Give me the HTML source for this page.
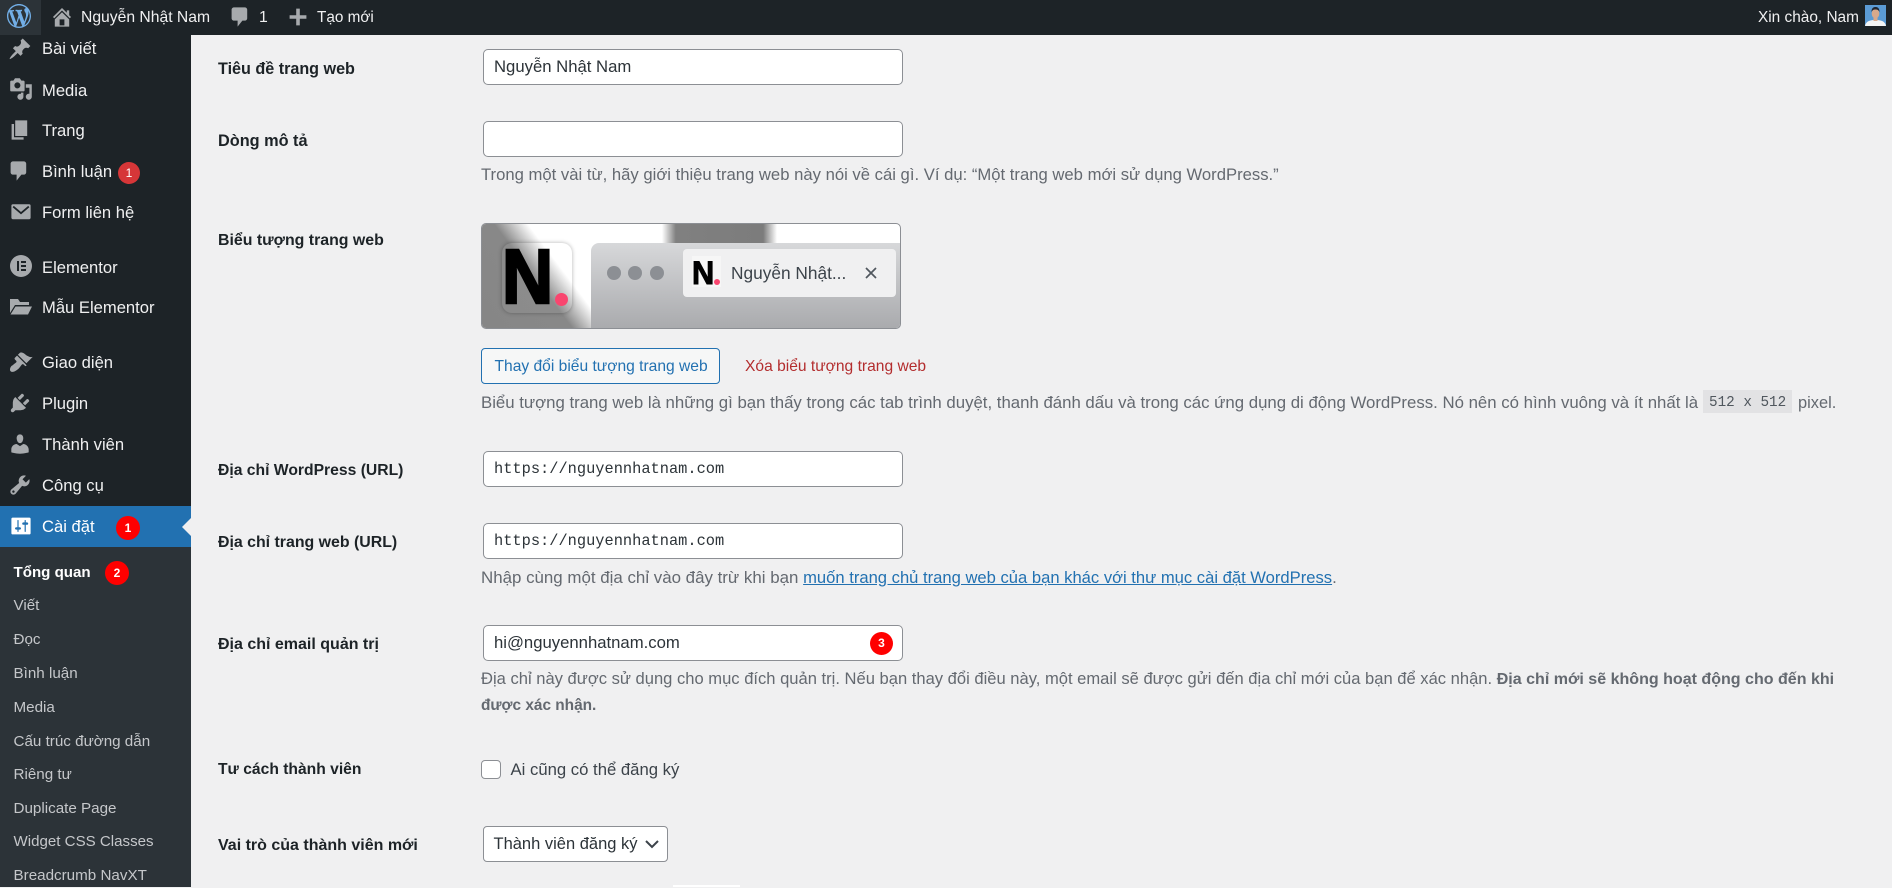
<!DOCTYPE html>
<html lang="vi"><head><meta charset="utf-8"><title>Cài đặt</title>
<style>
*{box-sizing:border-box}
html,body{margin:0;padding:0;width:1892px;height:887px;overflow:hidden;background:#f0f0f1;font-family:"Liberation Sans","Noto Sans CJK JP",sans-serif;font-size:16.5px;color:#1d2327}
.a,.t,svg.i{position:absolute}
.t{white-space:nowrap;line-height:24px;height:24px}
#bar{position:absolute;left:0;top:0;width:1892px;height:35px;background:#1d2327}
#side{position:absolute;left:0;top:35px;width:191px;height:852px;background:#1d2327}
#sub{position:absolute;left:0;top:512px;width:191px;height:340px;background:#2c3338}
.m{color:#f0f0f1;left:42px;font-size:16.6px}
.s{color:#c5c7ca;left:13.5px;font-size:15.2px}
.l{left:218px;font-weight:bold;font-size:15.9px;color:#1d2327}
.d{left:481px;color:#646970;font-size:16.6px}
.in{position:absolute;left:483px;width:420px;height:36px;background:#fff;border:1px solid #8c8f94;border-radius:5px}
.v{left:494px;font-size:16.7px;color:#2c3338}
.mono{left:494px;font-family:"Liberation Mono",monospace;font-size:15.35px;color:#2c3338}
svg.i{width:24px;height:24px;fill:#a7aaad}
.b{position:absolute;border-radius:50%;color:#fff;text-align:center;font-size:12px;font-weight:bold}
.bt{color:#f0f0f1;font-size:15.8px;top:6px}
</style></head><body>

<div id="side"><div id="sub"></div></div>
<div class="a" style="left:0;top:506px;width:191px;height:41px;background:#2271b1"></div>
<div class="a" style="left:182px;top:518px;border:9px solid transparent;border-left:0;border-right-color:#f0f0f1"></div>

<div id="bar"></div>
<div class="a" style="left:0;top:0;width:41px;height:35px;background:#2c3338"></div>
<svg class="i" style="left:7px;top:4px;fill:#72aee6" viewBox="0 0 20 20"><path d="M20 10c0-5.510-4.490-10-10-10C4.480 0 0 4.490 0 10c0 5.520 4.480 10 10 10 5.510 0 10-4.480 10-10zM7.780 15.370L4.370 6.220c.55-.02 1.170-.08 1.170-.08.5-.06.44-1.130-.06-1.110 0 0-1.450.11-2.370.11-.18 0-.37 0-.58-.01C4.120 2.690 6.870 1.110 10 1.110c2.330 0 4.450.87 6.050 2.340-.68-.11-1.650.39-1.650 1.580 0 .74.45 1.360.9 2.100.35.61.55 1.360.55 2.460 0 1.490-1.400 5-1.400 5l-3.030-8.370c.54-.02.82-.17.82-.17.5-.05.44-1.250-.06-1.220 0 0-1.440.12-2.380.12-.87 0-2.330-.12-2.330-.12-.5-.03-.56 1.200-.06 1.220l.92.08 1.260 3.410zM17.410 10c.24-.64.74-1.870.43-4.250.7 1.290 1.050 2.710 1.050 4.250 0 3.290-1.730 6.240-4.400 7.780.97-2.590 1.940-5.200 2.920-7.780zM6.100 18.090C3.120 16.650 1.110 13.530 1.110 10c0-1.300.23-2.480.72-3.590C3.250 10.300 4.670 14.200 6.100 18.090zm4.030-6.630l2.580 6.980c-.86.29-1.760.45-2.710.45-.79 0-1.570-.11-2.290-.33.81-2.380 1.620-4.740 2.420-7.100z"/></svg>
<svg class="i" style="left:50px;top:5px" viewBox="0 0 20 20"><path d="M16 8.500l1.530 1.530-1.060 1.060L10 4.620l-6.470 6.470-1.060-1.060L10 2.500l4 4v-2h2v4zm-6-2.460l6 5.990V18H4v-5.970zM12 17v-5H8v5h4z"/></svg>
<div class="t bt" style="left:81px;font-size:15.7px">Nguyễn Nhật Nam</div>
<svg class="i" style="left:228px;top:5px" viewBox="0 0 20 20"><path d="M5 2h9c1.100 0 2 .9 2 2v7c0 1.100-.9 2-2 2h-2l-4 5v-5H5c-1.100 0-2-.9-2-2V4c0-1.100.9-2 2-2z"/></svg>
<div class="t bt" style="left:259px">1</div>
<svg class="i" style="left:286px;top:5px" viewBox="0 0 20 20"><path d="M17 8.500v3h-5.500V17h-3v-5.500H3v-3h5.500V3h3v5.500H17z"/></svg>
<div class="t bt" style="left:317px;font-size:15.3px">Tạo mới</div>
<div class="t bt" style="left:1758px;font-size:15.4px">Xin chào, Nam</div>
<svg class="a" style="left:1865px;top:5px" width="21" height="21" viewBox="0 0 21 21"><rect width="21" height="21" fill="#5b9bd5"/><path d="M0 21c1-5 5-6 10.500-6S20 16 21 21z" fill="#f4f5f5"/><rect x="8.500" y="11" width="4" height="5" fill="#d8a98c"/><ellipse cx="10.500" cy="8.500" rx="3.800" ry="5" fill="#d8a98c"/><path d="M6.500 7c0-4 2-5 4-5s4 1 4 5c-1-2-2-2.500-4-2.500S7.500 5 6.500 7z" fill="#1f2530"/></svg>

<!-- menu -->
<svg class="i" style="left:8px;top:37px" viewBox="0 0 20 20"><path d="M10.440 3.020l1.820-1.820 6.360 6.350-1.830 1.820c-1.050-.68-2.480-.57-3.410.36l-.75.75c-.92.93-1.040 2.350-.35 3.410l-1.830 1.820-2.410-2.410-2.800 2.790c-.42.42-3.380 2.710-3.800 2.290s1.860-3.390 2.280-3.810l2.790-2.790L4.100 9.360l1.830-1.820c1.050.69 2.480.57 3.400-.36l.75-.75c.93-.92 1.050-2.350.36-3.410z"/></svg>
<div class="t m" style="top:37px">Bài viết</div>
<svg class="i" style="left:9px;top:77px" viewBox="0 0 20 20"><path d="M13 11V4c0-.55-.45-1-1-1h-1.670L9 1H5L3.670 3H2c-.55 0-1 .45-1 1v7c0 .55.45 1 1 1h10c.55 0 1-.45 1-1zM7 4.500c1.380 0 2.500 1.120 2.500 2.500S8.380 9.500 7 9.500 4.500 8.380 4.500 7 5.620 4.500 7 4.500zM14 6h5v10.500c0 1.380-1.120 2.500-2.500 2.500S14 17.880 14 16.500s1.120-2.500 2.500-2.500c.17 0 .34.02.5.05V9h-3V6zm-4 8.050V13h2v3.500c0 1.380-1.120 2.500-2.500 2.500S7 17.880 7 16.500 8.120 14 9.500 14c.17 0 .34.02.5.05z"/></svg>
<div class="t m" style="top:78.500px">Media</div>
<svg class="i" style="left:8px;top:118px" viewBox="0 0 20 20"><path d="M6 15V2h10v13H6zm-1 1h8v2H3V5h2v11z"/></svg>
<div class="t m" style="top:119px">Trang</div>
<svg class="i" style="left:7px;top:159px" viewBox="0 0 20 20"><path d="M5 2h9c1.100 0 2 .9 2 2v7c0 1.100-.9 2-2 2h-2l-4 5v-5H5c-1.100 0-2-.9-2-2V4c0-1.100.9-2 2-2z"/></svg>
<div class="t m" style="top:160px">Bình luận</div>
<div class="b" style="left:118px;top:162px;width:22px;height:22px;background:#d63638;line-height:23px;font-weight:normal">1</div>
<svg class="i" style="left:9px;top:200px" viewBox="0 0 20 20"><rect x="2" y="3.500" width="16" height="12.500" rx="1.300"/><path d="M3.500 5.500L10 11l6.500-5.500" fill="none" stroke="#1d2327" stroke-width="1.500"/></svg>
<div class="t m" style="top:201px">Form liên hệ</div>
<svg class="i" style="left:9px;top:254px" viewBox="0 0 24 24"><path fill-rule="evenodd" d="M12 1a11 11 0 100 22 11 11 0 000-22zM8 7h2v10H8zm4 0h5v2h-5zm0 4h5v2h-5zm0 4h5v2h-5z"/></svg>
<div class="t m" style="top:256px">Elementor</div>
<svg class="i" style="left:9px;top:295px" viewBox="0 0 24 24"><path d="M1 4h8l2 3h9v3H6L1 18zM6.500 11.500H23l-4 8H1.500z"/></svg>
<div class="t m" style="top:296px">Mẫu Elementor</div>
<svg class="i" style="left:9px;top:350px" viewBox="0 0 20 20"><path d="M14.480 11.060L7.410 3.990l1.500-1.500c.5-.56 2.300-.47 3.510.32 1.210.8 1.430 1.280 2.910 2.100 1.180.64 2.450 1.260 4.450.85zm-.71.71L6.700 4.700 4.930 6.470c-.39.39-.39 1.020 0 1.410l1.060 1.060c.39.39.39 1.030 0 1.420-.6.6-1.430 1.110-2.210 1.690-.35.26-.7.53-1.010.84C1.430 13.230 0 16.370 1.360 17.740c1.370 1.360 4.510-.07 6.860-2.410.31-.31.58-.66.85-1.020.57-.78 1.080-1.610 1.690-2.210.39-.39 1.020-.39 1.410 0l1.060 1.060c.39.39 1.020.39 1.410 0z"/></svg>
<div class="t m" style="top:351px">Giao diện</div>
<svg class="i" style="left:8px;top:391px" viewBox="0 0 20 20"><path d="M13.110 4.360L9.870 7.600 8 5.730l3.240-3.240c.35-.34 1.050-.2 1.560.32.52.51.66 1.210.31 1.550zm-8 1.770l.91-1.120 9.010 9.010-1.190.84c-.71.71-2.630 1.160-3.820 1.160H6.140L4.900 17.260c-.59.59-1.540.59-2.120 0-.59-.58-.59-1.530 0-2.120l1.240-1.240v-3.880c0-1.130.4-3.190 1.090-3.890zm7.260 3.970l3.240-3.240c.34-.35 1.040-.21 1.550.31.52.51.66 1.210.31 1.550l-3.240 3.250z"/></svg>
<div class="t m" style="top:392px">Plugin</div>
<svg class="i" style="left:8px;top:432px" viewBox="0 0 20 20"><path d="M10 9.250c-2.270 0-2.730-3.440-2.730-3.440C7 4.020 7.820 2 9.970 2c2.160 0 2.980 2.020 2.710 3.810 0 0-.41 3.440-2.680 3.440zm0 2.570L12.720 10c2.390 0 4.520 2.330 4.520 4.530v2.490s-3.650 1.130-7.240 1.130c-3.650 0-7.240-1.130-7.240-1.130v-2.490c0-2.250 1.940-4.480 4.470-4.480z"/></svg>
<div class="t m" style="top:433px">Thành viên</div>
<svg class="i" style="left:8px;top:473px" viewBox="0 0 20 20"><path d="M16.680 9.770c-1.340 1.340-3.300 1.670-4.950.99l-5.410 6.520c-.99.99-2.590.99-3.580 0s-.99-2.590 0-3.570l6.520-5.420c-.68-1.650-.35-3.610.99-4.950 1.280-1.280 3.120-1.620 4.720-1.060l-2.890 2.890 2.820 2.820 2.860-2.870c.53 1.580.18 3.390-1.080 4.650zM3.810 16.210c.4.39 1.040.39 1.430 0 .4-.4.4-1.040 0-1.430-.39-.4-1.030-.4-1.430 0-.39.39-.39 1.030 0 1.430z"/></svg>
<div class="t m" style="top:474px">Công cụ</div>
<svg class="i" style="left:9px;top:514px;fill:#fff" viewBox="0 0 20 20"><path d="M18 16V4c0-.55-.45-1-1-1H3c-.55 0-1 .45-1 1v12c0 .55.45 1 1 1h14c.55 0 1-.45 1-1zM8 11h1c.55 0 1 .45 1 1s-.45 1-1 1H8v1.500c0 .28-.22.5-.5.5s-.5-.22-.5-.5V13H6c-.55 0-1-.45-1-1s.45-1 1-1h1V5.500c0-.28.22-.5.5-.5s.5.22.5.5V11zm5-2h-1c-.55 0-1-.45-1-1s.45-1 1-1h1V5.500c0-.28.22-.5.5-.5s.5.22.5.5V7h1c.55 0 1 .45 1 1s-.45 1-1 1h-1v5.500c0 .28-.22.5-.5.5s-.5-.22-.5-.5V9z"/></svg>
<div class="t m" style="top:515px;color:#fff">Cài đặt</div>
<div class="b" style="left:116px;top:516px;width:24px;height:24px;background:#f00;line-height:25px">1</div>

<div class="t s" style="top:561px;color:#fff;font-weight:bold;font-size:15.100px">Tổng quan</div>
<div class="b" style="left:105px;top:561px;width:24px;height:24px;background:#f00;line-height:25px">2</div>
<div class="t s" style="top:594px">Viết</div>
<div class="t s" style="top:627.500px">Đọc</div>
<div class="t s" style="top:661.500px">Bình luận</div>
<div class="t s" style="top:695.500px">Media</div>
<div class="t s" style="top:729.500px">Cấu trúc đường dẫn</div>
<div class="t s" style="top:763px">Riêng tư</div>
<div class="t s" style="top:797px">Duplicate Page</div>
<div class="t s" style="top:830px;font-size:15.100px">Widget CSS Classes</div>
<div class="t s" style="top:863.500px">Breadcrumb NavXT</div>

<!-- form -->
<div class="t l" style="top:57px;font-size:16.150px">Tiêu đề trang web</div>
<div class="in" style="top:49px"></div>
<div class="t v" style="top:55px">Nguyễn Nhật Nam</div>

<div class="t l" style="top:129px;font-size:16.300px">Dòng mô tả</div>
<div class="in" style="top:121px"></div>
<div class="t d" style="top:163px;font-size:16.660px">Trong một vài từ, hãy giới thiệu trang web này nói về cái gì. Ví dụ: “Một trang web mới sử dụng WordPress.”</div>

<div class="t l" style="top:229px">Biểu tượng trang web</div>
<div class="a" style="left:481px;top:223px;width:420px;height:106px;border:1px solid #8c8f94;border-radius:5px;overflow:hidden;background:#fff">
  <div class="a" style="left:0;top:0;width:110px;height:104px;background:linear-gradient(53deg,#868686 0%,#888 48%,#fff 66%)"></div>
  <div class="a" style="left:180px;top:0;width:115px;height:20px;background:linear-gradient(90deg,#fff 0%,#808080 12%,#7c7c7c 88%,#fff 100%)"></div>
  <div class="a" style="left:109px;top:19px;width:320px;height:90px;border-radius:8px 0 0 0;background:linear-gradient(#d7d8da,#a7a8ab)"></div>
  <div class="a" style="left:20px;top:19px;width:70px;height:70px;border-radius:10px;background:rgba(255,255,255,.04);box-shadow:0 0 4px rgba(0,0,0,.3)"></div>
  <div class="a" style="left:19.500px;top:13px;font:bold 77px/80px 'Liberation Sans',sans-serif;color:#000;-webkit-text-stroke:2.500px #000;transform:scaleX(.92);transform-origin:0 50%">N</div>
  <div class="a" style="left:73px;top:68.500px;width:13px;height:13px;border-radius:50%;background:#f9466f"></div>
  <div class="a" style="left:125px;top:42px;width:14px;height:14px;border-radius:50%;background:#8c8f94"></div>
  <div class="a" style="left:146px;top:42px;width:14px;height:14px;border-radius:50%;background:#8c8f94"></div>
  <div class="a" style="left:168px;top:42px;width:14px;height:14px;border-radius:50%;background:#8c8f94"></div>
  <div class="a" style="left:201px;top:25px;width:213px;height:48px;border-radius:4px;background:#f0f0f1"></div>
  <div class="a" style="left:210px;top:32px;width:29px;height:31px;background:#f6f6f6"></div>
  <div class="a" style="left:209.500px;top:32.400px;font:bold 32px/34px 'Liberation Sans',sans-serif;color:#000;-webkit-text-stroke:1px #000;transform:scaleX(.96);transform-origin:0 50%">N</div>
  <div class="a" style="left:232px;top:55px;width:6px;height:6px;border-radius:50%;background:#f9466f"></div>
  <div class="t" style="left:249px;top:37px;font-size:17.300px;color:#3c434a">Nguyễn Nhật...</div>
  <svg class="a" style="left:382px;top:42px" width="14" height="14" viewBox="0 0 14 14"><path d="M2 2l10 10M12 2L2 12" stroke="#50575e" stroke-width="1.700" fill="none"/></svg>
</div>
<div class="a" style="left:481px;top:348px;width:239px;height:36px;border:1px solid #2271b1;border-radius:4px;background:#f6f7f7"></div>
<div class="t" style="left:494.500px;top:354.500px;color:#2271b1;font-size:15.600px">Thay đổi biểu tượng trang web</div>
<div class="t" style="left:745px;top:354.500px;color:#b32d2e;font-size:15.600px">Xóa biểu tượng trang web</div>
<div class="t d" style="top:391px;font-size:16.800px">Biểu tượng trang web là những gì bạn thấy trong các tab trình duyệt, thanh đánh dấu và trong các ứng dụng di động WordPress. Nó nên có hình vuông và ít nhất là</div>
<div class="a" style="left:1703px;top:390px;width:89px;height:23px;background:#e2e2e4"></div>
<div class="t" style="left:1709px;top:391px;color:#50575e;font:14.300px/24px 'Liberation Mono',monospace">512 x 512</div>
<div class="t d" style="left:1798px;top:391px;font-size:16.400px">pixel.</div>

<div class="t l" style="top:459px;font-size:15.700px">Địa chỉ WordPress (URL)</div>
<div class="in" style="top:451px"></div>
<div class="t mono" style="top:457px">https://nguyennhatnam.com</div>
<div class="t l" style="top:531px">Địa chỉ trang web (URL)</div>
<div class="in" style="top:523px"></div>
<div class="t mono" style="top:529px">https://nguyennhatnam.com</div>
<div class="t d" style="top:565.500px;font-size:16.900px">Nhập cùng một địa chỉ vào đây trừ khi bạn <span style="color:#2271b1;text-decoration:underline;font-size:16.600px">muốn trang chủ trang web của bạn khác với thư mục cài đặt WordPress</span>.</div>

<div class="t l" style="top:633px;font-size:16px">Địa chỉ email quản trị</div>
<div class="in" style="top:625px"></div>
<div class="t v" style="top:631px;font-size:16.700px">hi@nguyennhatnam.com</div>
<div class="b" style="left:870px;top:631.500px;width:23px;height:23px;background:#f00;line-height:22px">3</div>
<div class="t d" style="top:666.500px;font-size:16.570px">Địa chỉ này được sử dụng cho mục đích quản trị. Nếu bạn thay đổi điều này, một email sẽ được gửi đến địa chỉ mới của bạn để xác nhận. <b style="font-size:16.050px">Địa chỉ mới sẽ không hoạt động cho đến khi</b></div>
<div class="t d" style="top:692px;font-weight:bold;font-size:15.400px;top:693.500px">được xác nhận.</div>

<div class="t l" style="top:758px;font-size:15.650px">Tư cách thành viên</div>
<div class="a" style="left:481px;top:760px;width:20px;height:19px;border:1px solid #8c8f94;border-radius:4px;background:#fff"></div>
<div class="t" style="left:510.500px;top:758px;color:#3c434a;font-size:16.700px">Ai cũng có thể đăng ký</div>

<div class="t l" style="top:834px;font-size:16px">Vai trò của thành viên mới</div>
<div class="a" style="left:483px;top:826px;width:185px;height:36px;border:1px solid #8c8f94;border-radius:4px;background:#fff"></div>
<div class="t v" style="left:493.500px;top:832px;font-size:16.500px">Thành viên đăng ký</div>
<svg class="a" style="left:645px;top:838px" width="14" height="12" viewBox="0 0 14 12"><path d="M1 3l6 6 6-6" stroke="#3c434a" stroke-width="2" fill="none"/></svg>
<div class="a" style="left:673px;top:885px;width:67px;height:2px;background:#fff"></div>
</body></html>
